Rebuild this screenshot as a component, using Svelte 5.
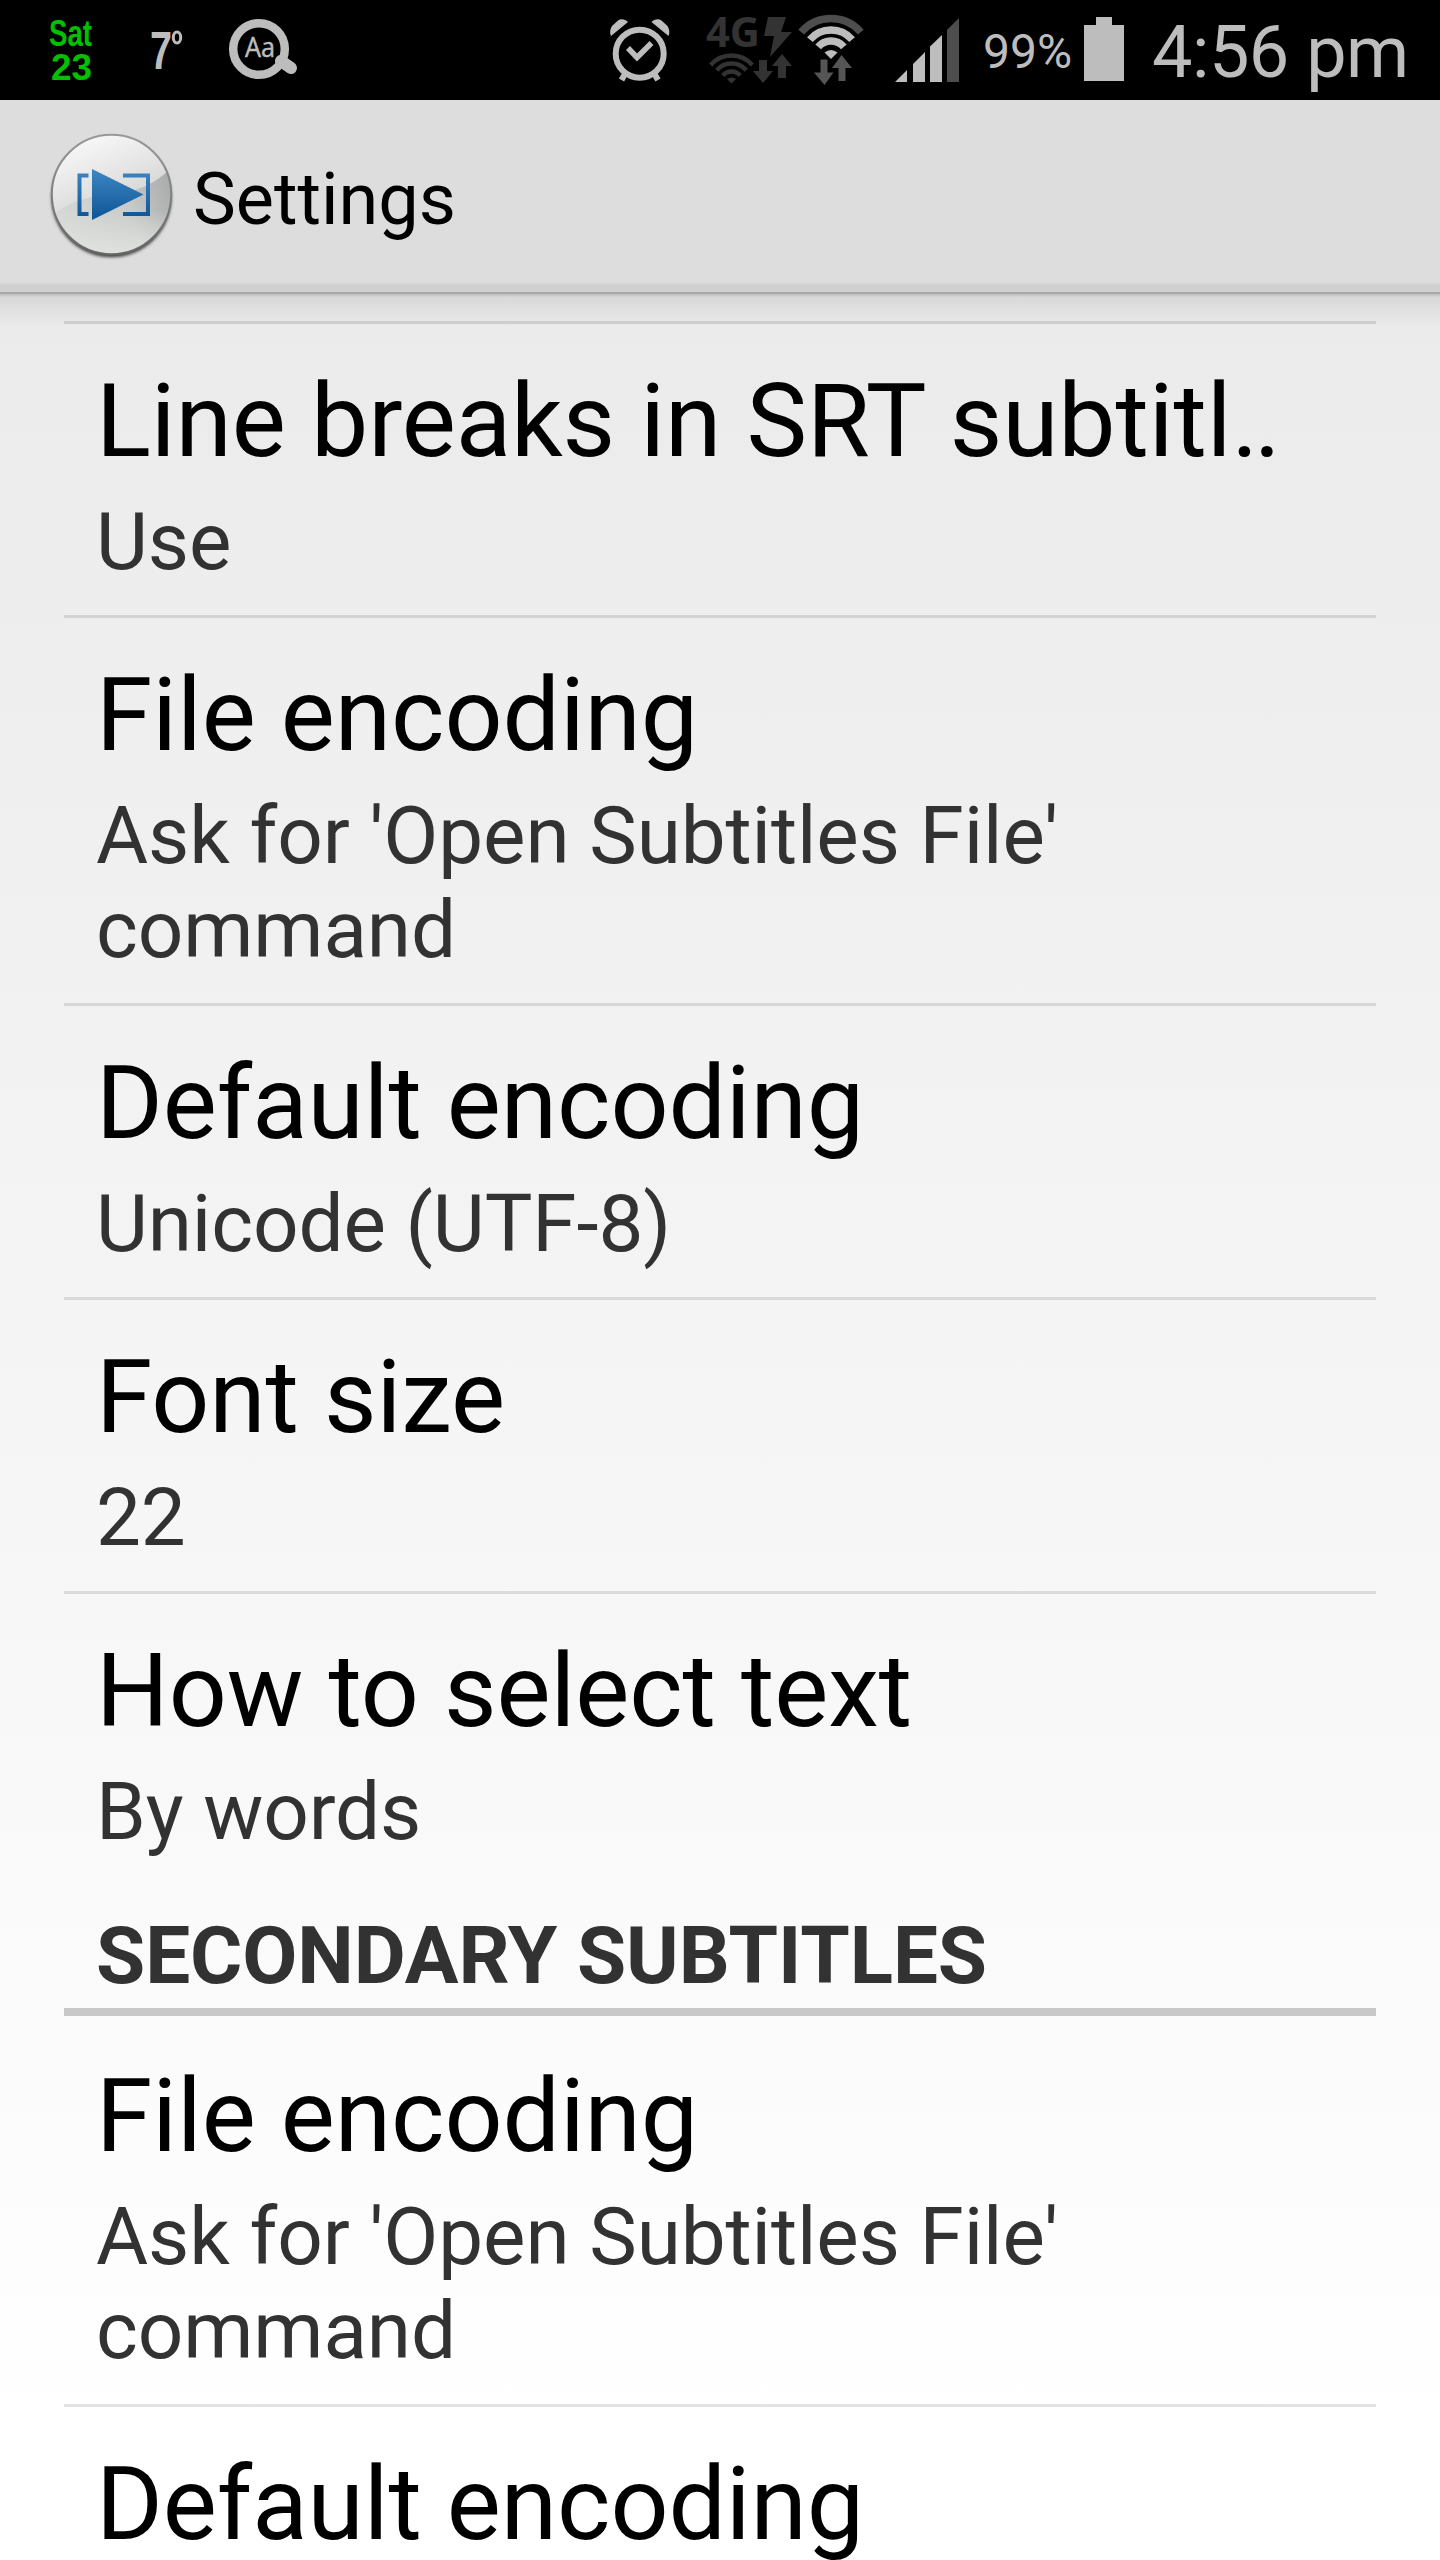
<script>
  const primary = [
    { title: 'Line breaks in SRT subtitl', clipped: true, summary: 'Use' },
    { title: 'File encoding', summary: "Ask for 'Open Subtitles File' command" },
    { title: 'Default encoding', summary: 'Unicode (UTF-8)' },
    { title: 'Font size', summary: '22' },
    { title: 'How to select text', summary: 'By words' },
  ];
  const secondary = [
    { title: 'File encoding', summary: "Ask for 'Open Subtitles File' command" },
    { title: 'Default encoding', summary: 'Unicode (UTF-8)' },
  ];

  // wifi fan segment, opening upwards from (cx, cy)
  function arc(cx, cy, r, deg = 49) {
    const a = (deg * Math.PI) / 180;
    const dx = r * Math.sin(a), dy = r * Math.cos(a);
    return `M${cx - dx} ${cy - dy}A${r} ${r} 0 0 1 ${cx + dx} ${cy - dy}`;
  }
</script>

{#snippet pref(row)}
  <li class="pref">
    <div class="title">{row.title}{#if row.clipped}<span class="dots">..</span>{/if}</div>
    <div class="summary">{row.summary}</div>
  </li>
{/snippet}

<div class="screen">
  <header class="status">
    <svg class="notif" width="260" height="100" viewBox="40 0 260 100">
      <g fill="#00c000" font-family="Liberation Sans, sans-serif" font-weight="700">
        <text x="49" y="46" font-size="36" textLength="43" lengthAdjust="spacingAndGlyphs">Sat</text>
        <text x="51" y="80" font-size="36" textLength="41" lengthAdjust="spacingAndGlyphs">23</text>
      </g>
      <text x="150" y="69" font-size="54" font-weight="700" font-family="Liberation Sans, sans-serif" fill="#bdbdbd" textLength="22" lengthAdjust="spacingAndGlyphs">7</text>
      <ellipse cx="177" cy="37.500" rx="3.700" ry="5.500" fill="none" stroke="#bdbdbd" stroke-width="3" />
      <circle cx="259" cy="49" r="25.800" fill="none" stroke="#bdbdbd" stroke-width="8.500" />
      <path d="M281 61L291 68" stroke="#bdbdbd" stroke-width="12" stroke-linecap="round" />
      <text x="245" y="57" font-size="27" font-family="Open Sans, sans-serif" fill="#bdbdbd" stroke="#bdbdbd" stroke-width="0.500" textLength="30" lengthAdjust="spacingAndGlyphs">Aa</text>
    </svg>

    <div class="system">
      <svg width="70" height="100" viewBox="605 0 70 100" fill="none" stroke="#bdbdbd">
        <circle cx="639.700" cy="53.700" r="24" stroke-width="6" />
        <path d="M628 48L637 57.500L651.500 43" stroke-width="5.500" />
        <path d="M625 74L621.500 80M654.500 74L658 80" stroke-width="6" />
        <path d="M611 36L628 22C625 19 621 18.500 618 20.500L612 26C610 29 609.500 33 611 36ZM668.500 36L651.500 22C654.500 19 658.500 18.500 661.500 20.500L667.500 26C669.500 29 670 33 668.500 36Z" fill="#bdbdbd" stroke="none" />
      </svg>
      <svg class="network" width="160" height="100" viewBox="704 0 160 100">
        <text x="706" y="47" font-size="41" font-weight="700" font-family="Open Sans, sans-serif" fill="#333" textLength="54" lengthAdjust="spacingAndGlyphs">4G</text>
        <path d="M768 17H786L781 32H792L770 57L774 36H764Z" fill="#333" />
        <g fill="none" stroke="#333" stroke-width="4.500">
          <path d={arc(731.5, 83, 27.5)} />
          <path d={arc(731.5, 83, 19.500)} />
          <path d={arc(731.5, 83, 11.500)} />
        </g>
        <path d="M731.500 83.500L727 79Q731.500 76 736 79Z" fill="#333" />
        <path d="M759 60H767V71H773L763 83L753 71H759ZM778 78H786V66H792L782 54L772 66H778Z" fill="#333" />
        <path d={arc(831, 58, 39.5)} fill="none" stroke="#4d4d4d" stroke-width="7.500" />
        <g fill="none" stroke="#bdbdbd" stroke-width="7.500">
          <path d={arc(831, 58, 28)} />
          <path d={arc(831, 58, 17)} />
        </g>
        <path d="M831 59L824.500 52.500Q831 47.500 837.500 52.500Z" fill="#bdbdbd" />
        <path d="M820.500 59.500H827.500V72.500H833.500L824.500 85L814 72.500H820.500ZM838.500 81H845.500V68H852L841.500 55L832 68H838.500Z" fill="#555" />
      </svg>
      <svg class="signal" width="66" height="100" viewBox="894 0 66 100" fill="#bdbdbd">
        <path d="M895 82L907 70V82ZM913 82V64L925 52V82ZM930 82V46.500L942 35V82Z" />
        <path d="M947 82V30L959 18V82Z" fill="#4d4d4d" />
      </svg>
      <span class="percent">99%</span>
      <svg class="battery" width="40" height="100" viewBox="1084 0 40 100" fill="#bdbdbd">
        <path d="M1096 17H1112V25H1124V81H1084V25H1096Z" />
      </svg>
      <span class="clock">4:56 pm</span>
    </div>
  </header>

  <div class="actionbar">
    <svg width="130" height="134" viewBox="47 130 130 134">
      <defs>
        <linearGradient id="shade" x1="0" y1="0.300" x2="1" y2="0">
          <stop offset="0" stop-color="#d4d7d4" />
          <stop offset="0.500" stop-color="#c9cbc9" />
          <stop offset="1" stop-color="#9fa1a1" />
        </linearGradient>
        <linearGradient id="gloss" x1="0" y1="0" x2="0.600" y2="1">
          <stop offset="0" stop-color="#fff" />
          <stop offset="1" stop-color="#cfd1cf" />
        </linearGradient>
        <linearGradient id="fade" x1="0" y1="0" x2="0" y2="1">
          <stop offset="0.300" stop-color="#dfe2df" stop-opacity="0" />
          <stop offset="1" stop-color="#dfe2df" />
        </linearGradient>
        <linearGradient id="rim" x1="0" y1="0" x2="0" y2="1">
          <stop offset="0" stop-color="#999" />
          <stop offset="1" stop-color="#666" />
        </linearGradient>
        <linearGradient id="blue" gradientUnits="userSpaceOnUse" x1="0" y1="169" x2="0" y2="220">
          <stop offset="0" stop-color="#3f86c3" />
          <stop offset="1" stop-color="#0d5496" />
        </linearGradient>
        <filter id="soft" x="-10%" y="-10%" width="120%" height="120%"><feGaussianBlur stdDeviation="1.600" /></filter>
        <clipPath id="disc"><circle cx="111.500" cy="194.500" r="59.500" /></clipPath>
      </defs>
      <circle cx="111.500" cy="197.300" r="60" fill="#444" filter="url(#soft)" />
      <g clip-path="url(#disc)">
        <rect x="50" y="134" width="124" height="122" fill="url(#shade)" />
        <rect x="50" y="190" width="124" height="66" fill="url(#fade)" />
        <path d="M50 134H174V165C150 190 130 192 110 194C85 197 65 203 50 218Z" fill="url(#gloss)" />
      </g>
      <circle cx="111.500" cy="194.500" r="59.700" fill="none" stroke="url(#rim)" stroke-width="2" />
      <path d="M88.500 175.500H79.500V214H88.500M123 175.500H148V214H123" fill="none" stroke="url(#blue)" stroke-width="4" />
      <path d="M92 169L143.500 194.500L92 220Z" fill="url(#blue)" />
    </svg>
    <h1>Settings</h1>
  </div>

  <main>
    <ul class="prefs">
      {#each primary as row}
        {@render pref(row)}
      {/each}
    </ul>
    <h2>SECONDARY SUBTITLES</h2>
    <ul class="prefs">
      {#each secondary as row}
        {@render pref(row)}
      {/each}
    </ul>
  </main>
</div>

<style>
  :global(body) { margin: 0; }
  .screen {
    width: 1440px;
    height: 2560px;
    overflow: hidden;
    display: flex;
    flex-direction: column;
    font-family: Roboto, sans-serif;
    color: #000;
    background: linear-gradient(#e8e8e8, #fff 2450px);
  }
  svg { display: block; flex: none; }

  .status {
    flex: none;
    height: 100px;
    display: flex;
    justify-content: space-between;
    background: #000;
    color: #bdbdbd;
    padding: 0 34px 0 40px;
  }
  .system { display: flex; white-space: nowrap; }
  .network { margin-left: 29px; }
  .signal { margin-left: 30px; }
  .percent { width: 90px; margin-left: 23px; font-size: 48px; line-height: 103px; }
  .battery { margin-left: 11px; }
  .clock { width: 254px; margin-left: 28px; font-size: 72px; line-height: 106px; letter-spacing: -0.5px; }

  .actionbar {
    flex: none;
    box-sizing: border-box;
    height: 194px;
    display: flex;
    align-items: flex-start;
    gap: 16px;
    padding: 30px 0 0 47px;
    background: linear-gradient(#ddd 182px, #d0d0d0 185px);
    border-bottom: 2px solid #a9a9a9;
  }
  h1 { margin: 28px 0 0; font-size: 72px; font-weight: 400; line-height: 84px; }

  main {
    padding: 27px 64px 0;
    background: linear-gradient(rgba(0, 0, 0, 0.2), rgba(0, 0, 0, 0.08) 3px, transparent 34px);
  }
  .prefs { list-style: none; margin: 0; padding: 0; }
  .pref { padding: 37px 32px 26px; border-top: 3px solid rgba(0, 0, 0, 0.11); }
  .title { font-size: 102px; line-height: 120px; letter-spacing: -0.1px; white-space: nowrap; }
  .dots { letter-spacing: -4.5px; }
  .summary { margin-top: 14px; font-size: 80px; line-height: 94px; letter-spacing: -0.1px; color: #323232; }
  h2 {
    margin: 0;
    padding: 24px 32px 5px;
    font-size: 80px;
    font-weight: 700;
    line-height: 94px;
    letter-spacing: -0.1px;
    color: #323232;
    border-bottom: 8px solid #c8c8c8;
  }
  h2 + .prefs .pref:first-child { border-top-color: transparent; }
</style>
